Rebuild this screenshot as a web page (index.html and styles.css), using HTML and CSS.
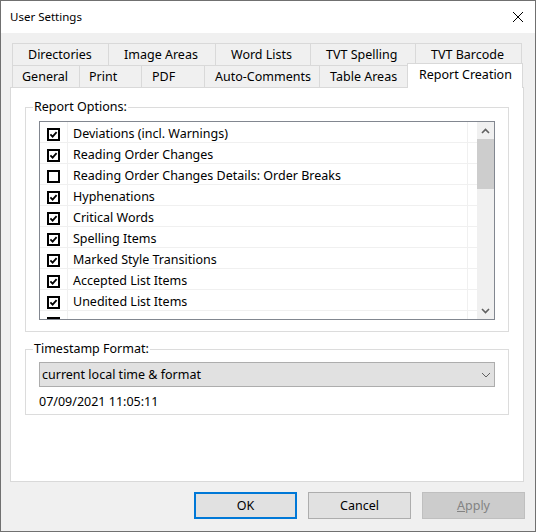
FILE: index.html
```html
<!DOCTYPE html>
<html>
<head>
<meta charset="utf-8">
<title>User Settings</title>
<link rel="stylesheet" href="styles.css">
</head>
<body>
<div class="window">
  <div class="titlebar">
    <span class="title">User Settings</span>
    <svg class="close" width="12" height="12" viewBox="0 0 12 12"><path d="M1 1 L11 11 M11 1 L1 11" stroke="#000" stroke-width="1" fill="none"/></svg>
  </div>
  <div class="body">
    <div class="tabs">
      <div class="tabrow row1">
        <div class="tab t-dir">Directories</div>
        <div class="tab t-img">Image Areas</div>
        <div class="tab t-word">Word Lists</div>
        <div class="tab t-spell">TVT Spelling</div>
        <div class="tab t-bar">TVT Barcode</div>
      </div>
      <div class="tabrow row2">
        <div class="tab t-gen">General</div>
        <div class="tab t-print">Print</div>
        <div class="tab t-pdf">PDF</div>
        <div class="tab t-auto">Auto-Comments</div>
        <div class="tab t-table">Table Areas</div>
        <div class="tab t-report selected">Report Creation</div>
      </div>
    </div>
    <div class="panel">
      <fieldset class="group group-options">
        <legend>Report Options:</legend>
        <div class="listbox">
          <div class="rows">
            <div class="row"><span class="cb-cell"><svg class="cb" width="13" height="13" viewBox="0 0 13 13"><rect x="1" y="1" width="11" height="11" fill="#fff" stroke="#000" stroke-width="2"/><path d="M3.4 6.4 L5.6 8.6 L9.6 4.2" fill="none" stroke="#000" stroke-width="1.8"/></svg></span><span class="label">Deviations (incl. Warnings)</span><span class="tail"></span></div>
            <div class="row"><span class="cb-cell"><svg class="cb" width="13" height="13" viewBox="0 0 13 13"><rect x="1" y="1" width="11" height="11" fill="#fff" stroke="#000" stroke-width="2"/><path d="M3.4 6.4 L5.6 8.6 L9.6 4.2" fill="none" stroke="#000" stroke-width="1.8"/></svg></span><span class="label">Reading Order Changes</span><span class="tail"></span></div>
            <div class="row"><span class="cb-cell"><svg class="cb" width="13" height="13" viewBox="0 0 13 13"><rect x="1" y="1" width="11" height="11" fill="#fff" stroke="#000" stroke-width="2"/></svg></span><span class="label">Reading Order Changes Details: Order Breaks</span><span class="tail"></span></div>
            <div class="row"><span class="cb-cell"><svg class="cb" width="13" height="13" viewBox="0 0 13 13"><rect x="1" y="1" width="11" height="11" fill="#fff" stroke="#000" stroke-width="2"/><path d="M3.4 6.4 L5.6 8.6 L9.6 4.2" fill="none" stroke="#000" stroke-width="1.8"/></svg></span><span class="label">Hyphenations</span><span class="tail"></span></div>
            <div class="row"><span class="cb-cell"><svg class="cb" width="13" height="13" viewBox="0 0 13 13"><rect x="1" y="1" width="11" height="11" fill="#fff" stroke="#000" stroke-width="2"/><path d="M3.4 6.4 L5.6 8.6 L9.6 4.2" fill="none" stroke="#000" stroke-width="1.8"/></svg></span><span class="label">Critical Words</span><span class="tail"></span></div>
            <div class="row"><span class="cb-cell"><svg class="cb" width="13" height="13" viewBox="0 0 13 13"><rect x="1" y="1" width="11" height="11" fill="#fff" stroke="#000" stroke-width="2"/><path d="M3.4 6.4 L5.6 8.6 L9.6 4.2" fill="none" stroke="#000" stroke-width="1.8"/></svg></span><span class="label">Spelling Items</span><span class="tail"></span></div>
            <div class="row"><span class="cb-cell"><svg class="cb" width="13" height="13" viewBox="0 0 13 13"><rect x="1" y="1" width="11" height="11" fill="#fff" stroke="#000" stroke-width="2"/><path d="M3.4 6.4 L5.6 8.6 L9.6 4.2" fill="none" stroke="#000" stroke-width="1.8"/></svg></span><span class="label">Marked Style Transitions</span><span class="tail"></span></div>
            <div class="row"><span class="cb-cell"><svg class="cb" width="13" height="13" viewBox="0 0 13 13"><rect x="1" y="1" width="11" height="11" fill="#fff" stroke="#000" stroke-width="2"/><path d="M3.4 6.4 L5.6 8.6 L9.6 4.2" fill="none" stroke="#000" stroke-width="1.8"/></svg></span><span class="label">Accepted List Items</span><span class="tail"></span></div>
            <div class="row"><span class="cb-cell"><svg class="cb" width="13" height="13" viewBox="0 0 13 13"><rect x="1" y="1" width="11" height="11" fill="#fff" stroke="#000" stroke-width="2"/><path d="M3.4 6.4 L5.6 8.6 L9.6 4.2" fill="none" stroke="#000" stroke-width="1.8"/></svg></span><span class="label">Unedited List Items</span><span class="tail"></span></div>
            <div class="row"><span class="cb-cell"><svg class="cb" width="13" height="13" viewBox="0 0 13 13"><rect x="1" y="1" width="11" height="11" fill="#fff" stroke="#000" stroke-width="2"/><path d="M3.4 6.4 L5.6 8.6 L9.6 4.2" fill="none" stroke="#000" stroke-width="1.8"/></svg></span><span class="label"></span><span class="tail"></span></div>
          </div>
          <div class="scrollbar">
            <div class="sb-btn"><svg width="9" height="6" viewBox="0 0 9 6"><path d="M1 5 L4.5 1.5 L8 5" fill="none" stroke="#606060" stroke-width="1.6"/></svg></div>
            <div class="sb-thumb"></div>
            <div class="sb-track"></div>
            <div class="sb-btn"><svg width="9" height="6" viewBox="0 0 9 6"><path d="M1 1 L4.5 4.5 L8 1" fill="none" stroke="#606060" stroke-width="1.6"/></svg></div>
          </div>
        </div>
      </fieldset>
      <fieldset class="group group-ts">
        <legend>Timestamp Format:</legend>
        <div class="combo">
          <span class="combo-text">current local time &amp; format</span>
          <svg class="combo-arrow" width="10" height="6" viewBox="0 0 10 6"><path d="M1 1 L5 5 L9 1" fill="none" stroke="#606060" stroke-width="1"/></svg>
        </div>
        <div class="ts-value">07/09/2021 11:05:11</div>
      </fieldset>
    </div>
    <div class="buttons">
      <div class="btn btn-default">OK</div>
      <div class="btn">Cancel</div>
      <div class="btn btn-disabled"><u>A</u>pply</div>
    </div>
  </div>
</div>
</body>
</html>
```

FILE: styles.css
```css
* { box-sizing: border-box; }
html, body { margin: 0; padding: 0; }
body {
  font-family: "Segoe UI", "Noto Sans", "Open Sans", sans-serif;
  font-size: 12.5px;
  color: #000;
  background: #fff;
}
.window {
  width: 536px;
  height: 532px;
  border: 1px solid #707070;
  display: flex;
  flex-direction: column;
  background: #f0f0f0;
}
.titlebar {
  height: 32px;
  background: #fff;
  display: flex;
  align-items: center;
  justify-content: space-between;
  padding: 0 11px 0 9px;
}
.title { line-height: 16px; font-size: 11.5px; }
.close { display: block; }
.body {
  flex: 1;
  padding: 10px 11px 0 9px;
  display: flex;
  flex-direction: column;
}
.tabs { margin-left: 2px; }
.tabrow {
  display: flex;
  height: 22px;
}
.tab {
  height: 22px;
  border: 1px solid #d9d9d9;
  border-bottom: none;
  background: #f0f0f0;
  line-height: 22px;
  white-space: nowrap;
  margin-left: -1px;
  flex: none;
}
.tab:first-child { margin-left: 0; }
.row1 .tab { padding-left: 15px; }
.row2 .tab { padding-left: 9px; }
.t-dir { width: 97px; }
.t-img { width: 108px; }
.t-word { width: 96px; }
.t-spell { width: 106px; }
.t-bar { width: 107px; }
.t-gen { width: 68px; }
.t-print { width: 63px; }
.row2 .t-pdf { width: 64px; padding-left: 10px; }
.row2 .t-auto { width: 116px; padding-left: 10px; }
.row2 .t-table { width: 90px; padding-left: 10px; }
.row2 .tab.selected {
  width: 116px;
  height: 25px;
  margin-top: -2px;
  margin-left: -2px;
  background: #fff;
  line-height: 22px;
  padding-left: 11px;
  position: relative;
  z-index: 1;
}
.panel {
  height: 395px;
  background: #fff;
  border: 1px solid #d9d9d9;
  padding: 11px 14px 0 14px;
  display: flex;
  flex-direction: column;
}
.group {
  margin: 0;
  border: 1px solid #dcdcdc;
  padding: 6px 13px 11px 13px;
  min-width: 0;
}
.group legend {
  padding: 0 1px;
  margin-left: -6px;
  line-height: 16px;
}
.listbox {
  height: 199px;
  border: 1px solid #828790;
  display: flex;
  overflow: hidden;
}
.rows {
  flex: 1;
  overflow: hidden;
}
.row {
  height: 21px;
  border-bottom: 1px solid #f0f0f0;
  display: flex;
}
.cb-cell {
  width: 28px;
  border-right: 1px solid #f0f0f0;
  padding: 6px 0 0 7px;
  flex: none;
}
.cb { display: block; }
.label {
  flex: 1;
  border-right: 1px solid #f0f0f0;
  padding: 3px 0 0 5px;
  line-height: 17px;
  white-space: nowrap;
  overflow: hidden;
}
.tail { width: 9px; flex: none; }
.scrollbar {
  width: 17px;
  background: #f0f0f0;
  display: flex;
  flex-direction: column;
  flex: none;
}
.sb-btn {
  height: 17px;
  display: flex;
  align-items: center;
  justify-content: center;
}
.sb-thumb {
  height: 50px;
  background: #cdcdcd;
}
.sb-track { flex: 1; }
.group-ts {
  margin-top: 9px;
  padding: 5px 13px 4px 13px;
}
.combo {
  height: 25px;
  background: #e1e1e1;
  border: 1px solid #adadad;
  display: flex;
  align-items: center;
  justify-content: space-between;
  padding: 0 3px 0 2px;
}
.combo-text { line-height: 16px; }
.combo-arrow { display: block; }
.ts-value {
  margin-top: 7px;
  line-height: 16px;
}
.buttons {
  margin-top: 10px;
  margin-right: -1px;
  display: flex;
  justify-content: flex-end;
  gap: 11px;
}
.btn {
  width: 103px;
  height: 27px;
  background: #e1e1e1;
  border: 1px solid #adadad;
  display: flex;
  align-items: center;
  justify-content: center;
}
.btn-default { border: 2px solid #0078d7; }
.btn-disabled {
  background: #cccccc;
  border-color: #bfbfbf;
  color: #838383;
}
```
